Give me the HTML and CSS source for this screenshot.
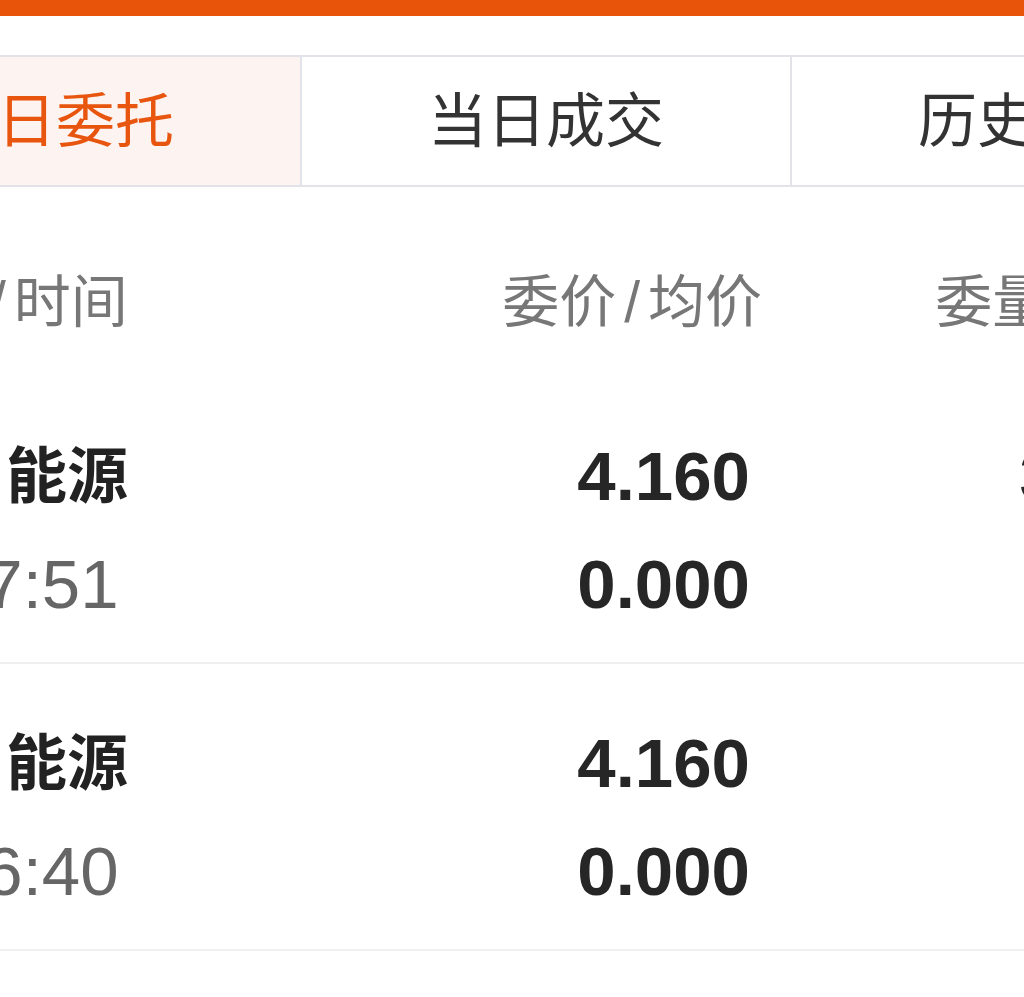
FILE: index.html
```html
<html>
  <head>
    <link rel="stylesheet" href="styles.css">
  </head>
  <body>
    <div class="screen">
      <div class="topbar"></div>
      <div class="tabs">
        <div class="tab active">今日委托</div>
        <div class="tab">当日成交</div>
        <div class="tab">历史委托</div>
      </div>
      <div class="list">
        <div class="row head">
          <div class="col name">名称<span class="sep">/</span>时间</div>
          <div class="col price">委价<span class="sep">/</span>均价</div>
          <div class="col vol">委量<span class="sep">/</span>已成</div>
        </div>
        <div class="row order">
          <div class="col name">
            <div class="title"><span class="prefix">广汇</span>能源</div>
            <div class="time">09:27:51</div>
          </div>
          <div class="col price">
            <div class="num">4.160</div>
            <div class="num">0.000</div>
          </div>
          <div class="col vol">
            <div class="num">3000</div>
            <div class="num">0</div>
          </div>
        </div>
        <div class="row order">
          <div class="col name">
            <div class="title"><span class="prefix">广汇</span>能源</div>
            <div class="time">09:26:40</div>
          </div>
          <div class="col price">
            <div class="num">4.160</div>
            <div class="num">0.000</div>
          </div>
          <div class="col vol">
            <div class="num">500</div>
            <div class="num">0</div>
          </div>
        </div>
      </div>
    </div>
  </body>
</html>
```

FILE: styles.css
```css
body {
  font-family: "Liberation Sans", "Noto Sans CJK SC", sans-serif;
  margin: 0;
  background: #fff;
  overflow: hidden;
}
.screen {
  width: 1700px;
  margin-left: -188px;
}
.topbar {
  height: 16px;
  background-color: #e8540a;
}
.tabs {
  display: flex;
  margin-top: 39px;
  border-top: 2px solid #e2e3e8;
  border-bottom: 2px solid #e2e3e8;
}
.tab {
  box-sizing: border-box;
  width: 490px;
  height: 128px;
  line-height: 130px;
  text-align: center;
  font-size: 59px;
  color: #333;
  border-right: 2px solid #e2e3e8;
}
.tab.active {
  color: #e8550f;
  background-color: #fdf4f1;
}
.row {
  display: flex;
  padding-left: 38px;
}
.col {
  box-sizing: border-box;
  flex: none;
}
.col.name {
  width: 400px;
}
.col.price {
  width: 512px;
  text-align: right;
}
.col.vol {
  width: 433px;
  text-align: right;
}
.head {
  height: 190px;
  box-sizing: border-box;
  padding-top: 75px;
  line-height: 80px;
  font-size: 57px;
  color: #777;
}
.head .name {
  padding-left: 18px;
}
.sep {
  margin: 0 8px;
}
.order {
  padding-top: 46px;
  padding-bottom: 23px;
  border-bottom: 2px solid #f0f0f0;
}
.order .col > div {
  height: 108px;
  line-height: 108px;
}
.title {
  font-size: 61px;
  font-weight: bold;
  color: #222;
  padding-left: 28px;
}
.prefix {
  margin-right: 6px;
}
.time {
  font-size: 69px;
  color: #666;
}
.num {
  font-size: 69px;
  font-weight: bold;
  color: #262626;
  padding-right: 12px;
}
.vol .num {
  padding-right: 22px;
}
```
